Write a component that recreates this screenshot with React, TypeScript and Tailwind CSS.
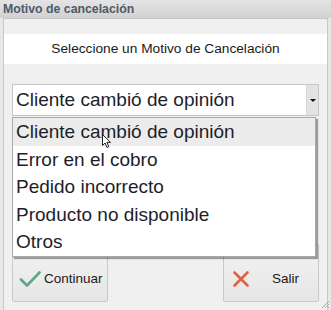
import { useState } from 'react';

const motivos = [
  'Cliente cambió de opinión',
  'Error en el cobro',
  'Pedido incorrecto',
  'Producto no disponible',
  'Otros',
];

const CheckIcon = () => (
  <svg width="22" height="18" viewBox="0 0 22 18">
    <path d="M2 9.5 L8 15.5 L20.5 2.5" fill="none" stroke="#5fa586" strokeWidth="2.6" strokeLinecap="round" strokeLinejoin="round" />
  </svg>
);

const CrossIcon = () => (
  <svg width="18" height="18" viewBox="0 0 18 18">
    <path d="M2.5 2.5 L15.5 15.5 M15.5 2.5 L2.5 15.5" stroke="#e2603f" strokeWidth="2.6" strokeLinecap="round" />
  </svg>
);

const Cursor = () => (
  <svg width="10" height="15" viewBox="0 0 10 15" className="absolute left-[102px] top-[134px]">
    <path d="M0.5 0.5 L0.5 11.5 L3 9 L5 13.5 L6.8 12.7 L4.9 8.4 L8.5 8.4 Z" fill="#fff" stroke="#222" strokeWidth="1" />
  </svg>
);

export default function App() {
  const [selected] = useState(0);

  return (
    <div className="relative w-[331px] h-[310px] overflow-hidden bg-[#e8e8e8] font-['Liberation_Sans',sans-serif] text-[#1c1c1c]">
      <div className="h-[18px] px-[3px] bg-gradient-to-b from-[#e4e4e4] to-[#d2d2d2] text-[12.3px] leading-[18px] font-bold text-[#4d5a68]">
        Motivo de cancelación
      </div>

      <div className="mx-[3px] h-[292px] border-x border-t border-[#c8c8c8] bg-[#f0f0f0] flex flex-col">
        <div className="h-[15px]" />
        <div className="h-[30px] bg-white flex items-center justify-center text-[13.7px] text-[#1a1a1a]">
          Seleccione un Motivo de Cancelación
        </div>
        <div className="h-[20px]" />

        <div className="mx-[8px] h-[32px] flex bg-white border border-[#c6c6c6]">
          <div className="flex-1 pl-[3px] text-[19px] leading-[30px] text-[#1e1e2a]">{motivos[selected]}</div>
          <div className="w-[12px] bg-[#e3e3e3] border-l border-[#d6d6d6] flex items-center justify-center">
            <div className="w-0 h-0 border-x-[3px] border-x-transparent border-t-[3px] border-t-[#111]" />
          </div>
        </div>

        <div className="flex-1" />

        <div className="flex justify-between px-[8px] pb-[8px]">
          <button className="w-[96px] h-[58px] flex items-end pb-[13px] pl-[6px] gap-[3px] rounded-[2px] border border-[#c9c9c9] bg-gradient-to-b from-[#f3f3f3] to-[#e6e6e6] text-[13.5px] text-[#1a1a1a]">
            <CheckIcon />
            <span className="leading-[18px]">Continuar</span>
          </button>
          <button className="w-[96px] h-[58px] flex items-end pb-[13px] pl-[8px] rounded-[2px] border border-[#c9c9c9] bg-gradient-to-b from-[#f3f3f3] to-[#e6e6e6] text-[13.5px] text-[#1a1a1a]">
            <CrossIcon />
            <span className="ml-[22px] leading-[18px]">Salir</span>
          </button>
        </div>
      </div>

      <ul className="absolute left-[12px] top-[117px] w-[304px] bg-white border border-[#a9a9a9] shadow-[2px_2px_1px_rgba(0,0,0,0.35)]">
        {motivos.map((m, i) => (
          <li
            key={m}
            className={`h-[27.6px] pl-[3px] text-[19px] leading-[27px] text-[#1e1e2a] ${i === 0 ? 'bg-[#ececec]' : ''}`}
          >
            {m}
          </li>
        ))}
      </ul>

      <Cursor />

      <svg width="9" height="9" viewBox="0 0 9 9" className="absolute right-[1px] bottom-[1px]">
        <path d="M8 1 L1 8 M8 4 L4 8 M8 7 L7 8" stroke="#a8a8a8" strokeWidth="1" />
      </svg>
    </div>
  );
}
